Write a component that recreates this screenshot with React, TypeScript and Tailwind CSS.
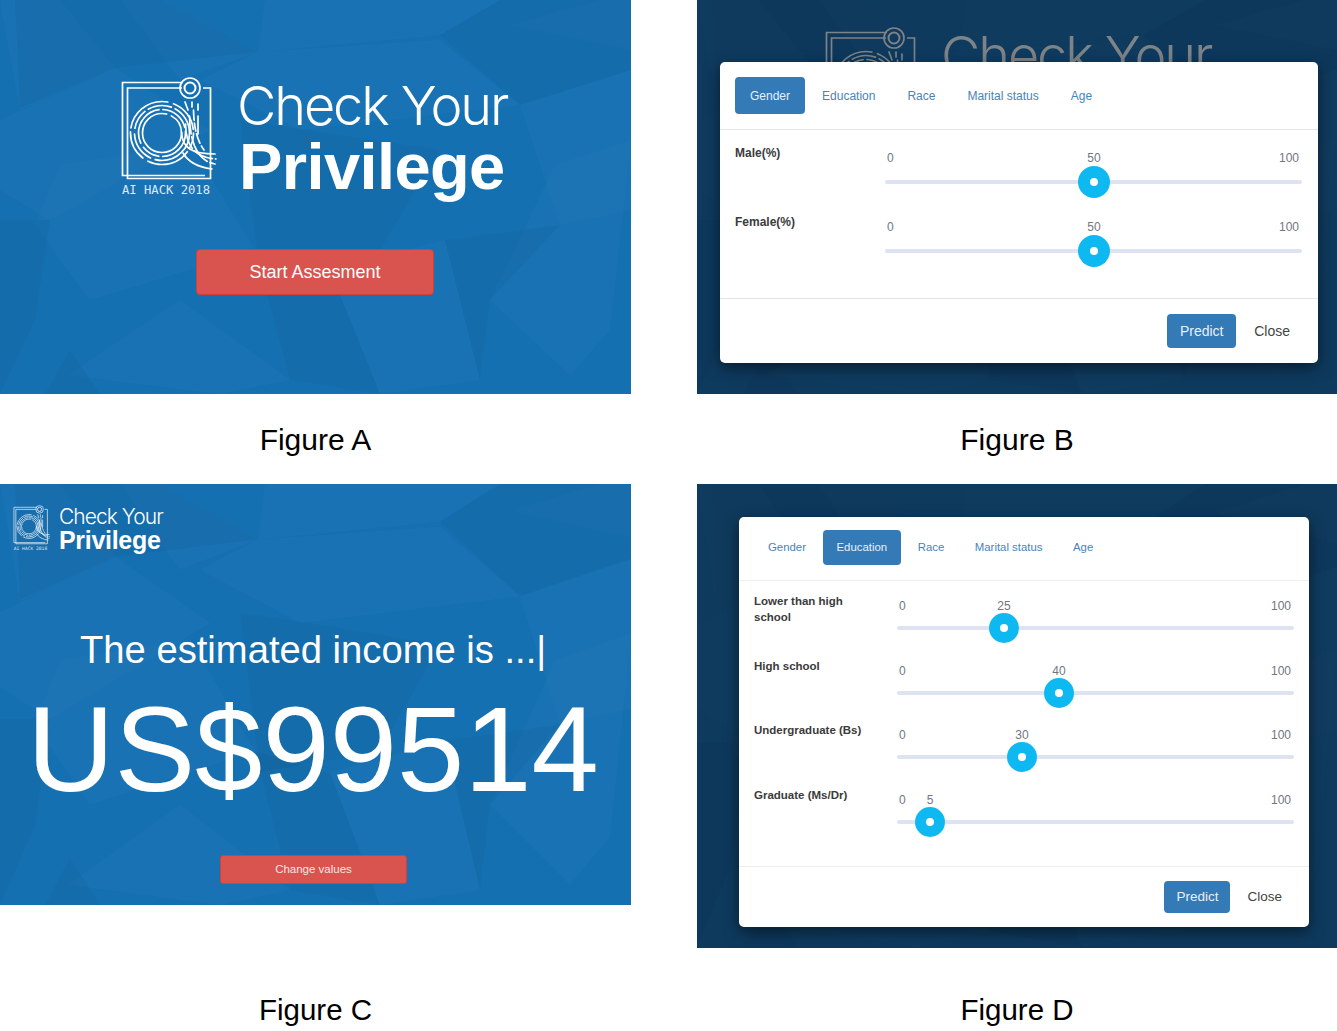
import { ReactNode } from 'react';

const LIGHT_POLYS = [
  '0,0 20,110 115,68 60,0',
  '160,0 258,52 180,80 120,0',
  '258,52 440,40 520,105 300,130 200,80',
  '265,0 500,0 440,35 258,52',
  '0,120 115,68 210,130 50,220 0,190',
  '60,165 190,145 255,250 90,300 35,225',
  '68,375 180,300 290,380 220,394',
  '330,270 445,240 480,380 380,394',
  '520,105 631,70 631,210 560,225',
  '555,165 631,140 610,330 570,375 490,300',
  '600,0 631,0 631,50 510,25',
];

const DARK_POLYS = [
  '15,0 160,0 258,52 115,68 20,108',
  '440,35 520,105 631,70 631,0 500,0',
  '240,120 440,150 380,250 260,270',
  '0,220 50,220 35,320 0,394',
  '255,250 330,270 380,394 290,380',
  '45,394 70,350 100,394',
  '445,240 560,225 490,300 480,380',
];

// low poly texture behind the blue panels
function PolyBg({ className = '' }: { className?: string }) {
  return (
    <svg viewBox="0 0 631 394" preserveAspectRatio="none" className={`absolute inset-0 w-full h-full ${className}`}>
      {LIGHT_POLYS.map((p) => (
        <polygon key={p} points={p} fill="#ffffff" fillOpacity="0.018" />
      ))}
      {DARK_POLYS.map((p) => (
        <polygon key={p} points={p} fill="#000000" fillOpacity="0.035" />
      ))}
    </svg>
  );
}

function Logo({ className, small }: { className: string; small?: boolean }) {
  return (
    <svg viewBox="0 0 100 126" fill="none" stroke="currentColor" className={className}>
      <path d="M63 8.5H2.5V101.5H85" strokeWidth="1.7" />
      <path d="M62 14H7.5V104.5H90.5V14H83" strokeWidth="1.7" />
      <circle cx="70" cy="14" r="10" strokeWidth="1.7" />
      <circle cx="70" cy="14" r="5.5" strokeWidth="2" />
      <g strokeWidth="1.7" strokeLinecap="round">
        <circle cx="42" cy="59" r="19.5" strokeDasharray="96 5 22 0" />
        <circle cx="42" cy="59" r="23.5" strokeDasharray="36 4 18 5 44 4 30 4" />
        <circle cx="42" cy="59" r="27.5" strokeDasharray="50 5 30 6 20 4 24 4 30 0" />
        <circle cx="42" cy="59" r="31.5" strokeDasharray="16 4 44 6 30 4 50 6 34 4" />
        <path d="M61.5 58C62 74 72 80 95 80" />
        <path d="M65.5 50C66 72 74 83 96 85" strokeDasharray="26 3 20 3" />
        <path d="M69.5 42C70 70 78 87 95 90" strokeDasharray="18 3 30 3" />
        <path d="M73.5 36C74 56 78 68 84 76" strokeDasharray="10 3 8 3" />
        <path d="M63 79C68 88 78 93 92 95" />
        <path d="M65 28L68 36" />
        <path d="M72 28V33" />
        <path d="M78 30V36M78 42V60" />
      </g>
      <text
        x="2"
        y="120"
        fill="currentColor"
        stroke="none"
        fontSize="12.2"
        className="font-['DejaVu_Sans_Mono','Liberation_Mono',monospace]"
        opacity={small ? 0.8 : 0.85}
      >
        AI HACK 2018
      </text>
    </svg>
  );
}

function BigTitle() {
  return (
    <div className="flex flex-col">
      <span className="font-['Inter',sans-serif] font-light text-[54px] leading-[63px] tracking-[-2.1px]">Check Your</span>
      <span className="pl-[2px] font-['Liberation_Sans',sans-serif] font-bold text-[65px] leading-[60px] tracking-[-0.6px]">Privilege</span>
    </div>
  );
}

const GENDER_ROWS = [
  { label: 'Male(%)', value: 50, pos: 209 },
  { label: 'Female(%)', value: 50, pos: 209 },
];

const EDU_ROWS = [
  { label: 'Lower than high school', value: 25, pos: 107 },
  { label: 'High school', value: 40, pos: 162 },
  { label: 'Undergraduate (Bs)', value: 30, pos: 125 },
  { label: 'Graduate (Ms/Dr)', value: 5, pos: 33 },
];

const TABS = ['Gender', 'Education', 'Race', 'Marital status', 'Age'];

function Tab({ name, active, className }: { name: string; active: boolean; className: string }) {
  return (
    <div
      className={`flex items-center rounded-[4px] whitespace-nowrap ${className} ${
        active ? 'bg-[#337ab7] text-[#e8f0f7]' : 'text-[#4684bb]'
      }`}
    >
      {name}
    </div>
  );
}

function Slider({
  value,
  pos,
  width,
  thumb,
  numberTop,
  trackTop,
}: {
  value: number;
  pos: number;
  width: number;
  thumb: number;
  numberTop: number;
  trackTop: number;
}) {
  return (
    <div className="relative h-full shrink-0 text-[12px] leading-4 text-[#72767f]" style={{ width }}>
      <span className="absolute left-[2px]" style={{ top: numberTop }}>0</span>
      <span className="absolute -translate-x-1/2" style={{ top: numberTop, left: pos }}>{value}</span>
      <span className="absolute right-[3px]" style={{ top: numberTop }}>100</span>
      <div className="absolute inset-x-0 h-1 rounded-full bg-[#dde3f3]" style={{ top: trackTop - 2 }} />
      <div
        className="absolute flex items-center justify-center rounded-full bg-[#0eb9f2]"
        style={{ width: thumb, height: thumb, left: pos - thumb / 2, top: trackTop - thumb / 2 }}
      >
        <div className="w-2 h-2 rounded-full bg-white" />
      </div>
    </div>
  );
}

function FigureCaption({ children, className }: { children: ReactNode; className: string }) {
  return (
    <div className={`flex justify-center font-['Liberation_Sans',sans-serif] leading-[34px] text-black ${className}`}>
      {children}
    </div>
  );
}

export default function App() {
  return (
    <div className="w-[1337px] h-[1031px] bg-white overflow-hidden font-['Liberation_Sans',sans-serif] grid grid-cols-[631px_640px] grid-rows-[484px_547px] gap-x-[66px]">
      {/* Figure A */}
      <div>
        <div className="relative h-[394px] bg-[#1570b2] text-white overflow-hidden">
          <PolyBg />
          <div className="relative flex flex-col">
            <div className="flex pt-[74px] pl-[120px] gap-[17px]">
              <Logo className="w-[100px] h-[126px] shrink-0" />
              <BigTitle />
            </div>
            <button className="self-start ml-[196px] mt-[49px] w-[238px] h-[46px] rounded-[4px] bg-[#d9534f] border border-[#d43f3a] text-[18px]">
              Start Assesment
            </button>
          </div>
        </div>
        <FigureCaption className="pt-[29px] text-[30px]">Figure A</FigureCaption>
      </div>

      {/* Figure B */}
      <div>
        <div className="relative h-[394px] bg-[#0e3a5e] overflow-hidden">
          <PolyBg className="opacity-40" />
          <div className="relative flex pt-[24px] pl-[127px] gap-[17px] text-[#7d8387]">
            <Logo className="w-[100px] h-[126px] shrink-0" />
            <BigTitle />
          </div>
          <div className="absolute left-[23px] top-[62px] w-[598px] h-[301px] bg-white rounded-[5px] shadow-[0_5px_15px_rgba(0,0,0,0.5)] flex flex-col">
            <div className="flex gap-[2px] pt-[15px] pl-[15px] h-[68px] border-b border-[#e5e5e5]">
              {TABS.map((t) => (
                <Tab key={t} name={t} active={t === 'Gender'} className="h-[37px] px-[15px] text-[12px]" />
              ))}
            </div>
            <div className="pt-2 h-[169px] border-b border-[#e5e5e5]">
              {GENDER_ROWS.map((r) => (
                <div key={r.label} className="flex h-[69px]">
                  <div className="w-[165px] pl-[15px] pt-[7px] text-[12px] leading-4 font-bold text-[#3b3b3b]">{r.label}</div>
                  <Slider value={r.value} pos={r.pos} width={417} thumb={32} numberTop={12} trackTop={44} />
                </div>
              ))}
            </div>
            <div className="flex justify-end items-center pt-[15px] pr-[28px] gap-[18px] text-[14px]">
              <button className="w-[69px] h-[34px] rounded-[4px] bg-[#337ab7] text-[#e8f0f7]">Predict</button>
              <span className="text-[#444444]">Close</span>
            </div>
          </div>
        </div>
        <FigureCaption className="pt-[29px] text-[30px]">Figure B</FigureCaption>
      </div>

      {/* Figure C */}
      <div>
        <div className="relative h-[421px] bg-[#1570b2] text-white overflow-hidden">
          <PolyBg />
          <div className="relative flex flex-col">
            <div className="flex pt-[20px] pl-[13px] gap-[8px]">
              <Logo small className="w-[38px] h-[48px] shrink-0" />
              <div className="flex flex-col">
                <span className="pt-[1px] font-['Inter',sans-serif] font-light text-[21px] leading-[24px] tracking-[-0.95px]">Check Your</span>
                <span className="font-['Liberation_Sans',sans-serif] font-bold text-[25px] leading-[23px] tracking-[-0.3px]">Privilege</span>
              </div>
            </div>
            <div className="pl-[80px] pt-[76px] text-[38.2px] leading-[44px] whitespace-nowrap">The estimated income is ...|</div>
            <div className="pl-[27px] pt-[12px] text-[121px] leading-[130px] whitespace-nowrap">US$99514</div>
            <button className="self-start ml-[220px] mt-[41px] w-[187px] h-[29px] rounded-[3px] bg-[#d9534f] border border-[#d43f3a] text-[11.5px] text-[#f7e5e4]">
              Change values
            </button>
          </div>
        </div>
        <FigureCaption className="pt-[88px] text-[29.5px]">Figure C</FigureCaption>
      </div>

      {/* Figure D */}
      <div>
        <div className="relative h-[464px] bg-[#0e3a5e] overflow-hidden">
          <PolyBg className="opacity-40" />
          <div className="absolute left-[42px] top-[33px] w-[570px] h-[410px] bg-white rounded-[5px] shadow-[0_5px_15px_rgba(0,0,0,0.5)] flex flex-col">
            <div className="flex gap-[2.5px] pt-[13px] pl-[15px] h-[64px] border-b border-[#eeeeee]">
              {TABS.map((t) => (
                <Tab key={t} name={t} active={t === 'Education'} className="h-[35px] px-[14px] text-[11.4px]" />
              ))}
            </div>
            <div className="pt-[9px] h-[286px] border-b border-[#eeeeee]">
              {EDU_ROWS.map((r) => (
                <div key={r.label} className="flex h-[64.5px]">
                  <div className="w-[158px] shrink-0 pl-[15px] pr-[30px] pt-[3px] text-[11.5px] leading-4 font-bold text-[#3b3b3b]">{r.label}</div>
                  <Slider value={r.value} pos={r.pos} width={397} thumb={30} numberTop={8} trackTop={38} />
                </div>
              ))}
            </div>
            <div className="flex justify-end items-center pt-[14px] pr-[27px] gap-[17px] text-[13.5px]">
              <button className="w-[66px] h-[32px] rounded-[4px] bg-[#337ab7] text-[#e8f0f7]">Predict</button>
              <span className="text-[#444444]">Close</span>
            </div>
          </div>
        </div>
        <FigureCaption className="pt-[45px] text-[29.5px]">Figure D</FigureCaption>
      </div>
    </div>
  );
}
